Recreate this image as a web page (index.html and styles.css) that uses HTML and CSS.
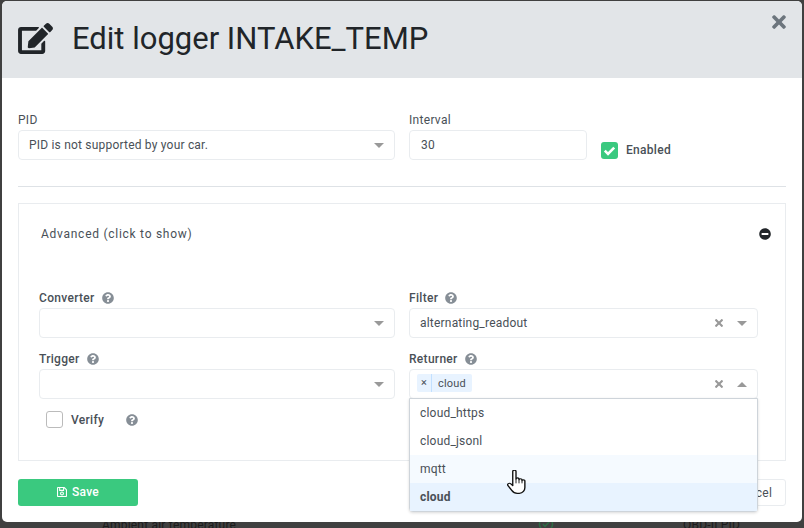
FILE: index.html
```html
<!DOCTYPE html>
<html lang="en">
<head>
    <meta charset="UTF-8">
    <meta name="viewport" content="width=device-width, initial-scale=1.0">
    <title>Edit logger</title>
    <link rel="stylesheet" href="styles.css">
</head>
<body>
    <svg class="sprite" xmlns="http://www.w3.org/2000/svg">
        <symbol id="i-help" viewBox="0 0 512 512"><path d="M504 256c0 136.997-111.043 248-248 248S8 392.997 8 256C8 119.083 119.043 8 256 8s248 111.083 248 248zM262.655 90c-54.497 0-89.255 22.957-116.549 63.758-3.536 5.286-2.353 12.415 2.715 16.258l34.699 26.31c5.205 3.947 12.621 3.008 16.665-2.122 17.864-22.658 30.113-35.797 57.303-35.797 20.429 0 45.698 13.148 45.698 32.958 0 14.976-12.363 22.667-32.534 33.976C247.128 238.528 216 254.941 216 296v4c0 6.627 5.373 12 12 12h56c6.627 0 12-5.373 12-12v-1.333c0-28.462 83.186-29.647 83.186-106.667 0-58.002-60.165-102-116.531-102zM256 338c-25.365 0-46 20.635-46 46 0 25.364 20.635 46 46 46s46-20.636 46-46c0-25.365-20.635-46-46-46z"/></symbol>
        <symbol id="i-times" viewBox="0 0 352 512"><path d="M242.72 256l100.07-100.07c12.28-12.28 12.28-32.19 0-44.48l-22.24-22.24c-12.28-12.28-32.19-12.28-44.48 0L176 189.28 75.93 89.21c-12.28-12.28-32.19-12.28-44.48 0L9.21 111.45c-12.28 12.28-12.28 32.19 0 44.48L109.28 256 9.21 356.07c-12.28 12.28-12.28 32.19 0 44.48l22.24 22.24c12.28 12.28 32.2 12.28 44.48 0L176 322.72l100.07 100.07c12.28 12.28 32.2 12.28 44.48 0l22.24-22.24c12.28-12.28 12.28-32.19 0-44.48L242.72 256z"/></symbol>
    </svg>

    <div class="behind">
        <span class="behind-name">Ambient air temperature</span>
        <svg class="behind-check" viewBox="0 0 16 16"><circle cx="8" cy="8" r="6.6"/><path d="M4.8 8l2.2 2.3 4.2-4.4"/></svg>
        <span class="behind-type">OBD-II PID</span>
    </div>

    <div class="modal">
        <div class="modal-header">
            <svg class="title-icon" viewBox="0 0 576 512"><path d="M402.6 83.2l90.2 90.2c3.8 3.8 3.8 10 0 13.8L274.4 405.6l-92.8 10.3c-12.4 1.4-22.9-9.1-21.5-21.5l10.3-92.8L388.8 83.2c3.8-3.8 10-3.8 13.8 0zm162-22.9l-48.8-48.8c-15.2-15.2-39.9-15.2-55.2 0l-35.4 35.4c-3.8 3.8-3.8 10 0 13.8l90.2 90.2c3.8 3.8 10 3.8 13.8 0l35.4-35.4c15.2-15.3 15.2-40 0-55.2zM384 346.2V448H64V128h229.8c3.2 0 6.2-1.3 8.5-3.5l40-40c7.6-7.6 2.2-20.5-8.5-20.5H48C21.5 64 0 85.5 0 112v352c0 26.5 21.5 48 48 48h352c26.5 0 48-21.5 48-48V306.2c0-10.7-12.9-16-20.5-8.5l-40 40c-2.2 2.3-3.5 5.3-3.5 8.5z"/></svg>
            <h1>Edit logger INTAKE_TEMP</h1>
            <svg class="close"><use href="#i-times"/></svg>
        </div>

        <div class="modal-body">
            <div class="top-row">
                <div class="field">
                    <label class="plain">PID</label>
                    <div class="select">
                        <span class="value">PID is not supported by your car.</span>
                        <span class="arrow"></span>
                    </div>
                </div>
                <div class="field">
                    <label class="plain">Interval</label>
                    <div class="input">30</div>
                </div>
                <div class="check-field">
                    <span class="check checked">
                        <svg viewBox="0 0 16 16"><path d="M3.6 8.2l3 3 5.8-6"/></svg>
                    </span>
                    <span class="check-label">Enabled</span>
                </div>
            </div>

            <hr>

            <div class="card">
                <div class="card-head">
                    <span>Advanced (click to show)</span>
                    <svg class="minus" viewBox="0 0 512 512"><path d="M256 8C119 8 8 119 8 256s111 248 248 248 248-111 248-248S393 8 256 8zM124 296c-6.6 0-12-5.4-12-12v-56c0-6.6 5.4-12 12-12h264c6.6 0 12 5.4 12 12v56c0 6.6-5.4 12-12 12H124z"/></svg>
                </div>
                <div class="card-grid">
                    <div class="field">
                        <label>Converter <svg class="help"><use href="#i-help"/></svg></label>
                        <div class="select"><span class="value"></span><span class="arrow"></span></div>
                    </div>
                    <div class="field">
                        <label>Filter <svg class="help"><use href="#i-help"/></svg></label>
                        <div class="select">
                            <span class="value">alternating_readout</span>
                            <svg class="clear"><use href="#i-times"/></svg>
                            <span class="arrow"></span>
                        </div>
                    </div>
                    <div class="field">
                        <label>Trigger <svg class="help"><use href="#i-help"/></svg></label>
                        <div class="select"><span class="value"></span><span class="arrow"></span></div>
                    </div>
                    <div class="field">
                        <label>Returner <svg class="help"><use href="#i-help"/></svg></label>
                        <div class="select open">
                            <span class="value tags">
                                <span class="tag"><span class="tag-x">×</span><span class="tag-text">cloud</span></span>
                            </span>
                            <svg class="clear"><use href="#i-times"/></svg>
                            <span class="arrow up"></span>
                            <ul class="menu">
                                <li>cloud_https</li>
                                <li>cloud_jsonl</li>
                                <li class="hover">mqtt</li>
                                <li class="selected">cloud</li>
                            </ul>
                        </div>
                    </div>
                </div>
                <div class="verify">
                    <span class="check"></span>
                    <span class="check-label">Verify</span>
                    <svg class="help"><use href="#i-help"/></svg>
                </div>
            </div>

            <div class="actions">
                <button class="btn-save">
                    <svg viewBox="0 0 448 512"><path d="M433.941 129.941l-83.882-83.882A48 48 0 0 0 316.118 32H48C21.49 32 0 53.49 0 80v352c0 26.51 21.49 48 48 48h352c26.51 0 48-21.49 48-48V163.882a48 48 0 0 0-14.059-33.941zM272 80v80H144V80h128zm122 352H54a6 6 0 0 1-6-6V86a6 6 0 0 1 6-6h42v104c0 13.255 10.745 24 24 24h176c13.255 0 24-10.745 24-24V83.882l78.243 78.243a6 6 0 0 1 1.757 4.243V426a6 6 0 0 1-6 6zM224 232c-48.523 0-88 39.477-88 88s39.477 88 88 88 88-39.477 88-88-39.477-88-88-88zm0 128c-22.056 0-40-17.944-40-40s17.944-40 40-40 40 17.944 40 40-17.944 40-40 40z"/></svg>
                    Save
                </button>
                <button class="btn-cancel">Cancel</button>
            </div>
        </div>
    </div>

    <svg class="cursor" viewBox="1 1 16 24" preserveAspectRatio="none">
        <path d="M5.6 2.4c0-1.6 2.6-1.6 2.6 0v7.2c0-1.3 2.4-1.3 2.4 0v.8c0-1.3 2.4-1.3 2.4 0v.9c0-1.2 2.3-1.2 2.3 .1v6.4c0 2.6-1.6 5.6-4.4 5.6H9.2c-2.2 0-3.4-1.2-4.4-2.8l-3-4.6c-1-1.6 1-3 2.3-1.7l1.5 1.7z"/>
        <path class="finger" d="M8.2 9.6v4.2M10.6 10.4v3.4M13 11.3v2.5"/>
    </svg>
</body>
</html>
```

FILE: styles.css
```css
* {
    box-sizing: border-box;
}
body {
    font-family: Roboto, Arial, sans-serif;
    font-size: 12px;
    letter-spacing: 0.2px;
    color: #495057;
    background-color: #404040;
    margin: 0;
    padding: 1px 2px;
    height: 528px;
    overflow: hidden;
    position: relative;
}
.sprite {
    display: none;
}

/* page that shows below the modal */
.behind {
    position: absolute;
    left: 0;
    top: 518px;
    width: 100%;
    height: 20px;
    color: #1c1c1c;
}
.behind-name {
    position: absolute;
    left: 102px;
    top: 0;
}
.behind-type {
    position: absolute;
    left: 683px;
    top: 0;
}
.behind-check {
    position: absolute;
    left: 538px;
    top: -2px;
    width: 16px;
    height: 16px;
    fill: none;
    stroke: #2f6b45;
    stroke-width: 1.5;
}

.modal {
    position: relative;
    width: 800px;
    height: 521px;
    background-color: #fff;
    border-radius: 5px;
    overflow: hidden;
}
.modal-header {
    display: flex;
    align-items: center;
    height: 77px;
    padding: 0 16px 2px;
    background-color: #e2e5e8;
    color: #212529;
    position: relative;
}
.title-icon {
    width: 35px;
    height: 31px;
    margin-right: 19px;
    fill: #212529;
}
h1 {
    margin: 0;
    font-size: 31px;
    font-weight: 400;
    letter-spacing: 0;
}
.close {
    position: absolute;
    right: 16px;
    top: 11px;
    width: 14px;
    height: 20px;
    fill: #6c757d;
}

.modal-body {
    padding: 34px 16px 0;
}
label {
    display: flex;
    align-items: center;
    gap: 5px;
    height: 18px;
    padding-bottom: 2px;
    letter-spacing: 0.3px;
}
.top-row {
    display: grid;
    grid-template-columns: 377px 178px auto;
    column-gap: 14px;
}
.select, .input {
    display: flex;
    align-items: center;
    position: relative;
    height: 30px;
    padding: 0 10px;
    background-color: #fff;
    border: 1px solid #e9ecef;
    border-radius: 4px;
}
.input {
    padding: 0 11px;
}
.value {
    flex: 1;
}
.arrow {
    width: 0;
    height: 0;
    margin-right: 0;
    border-left: 5px solid transparent;
    border-right: 5px solid transparent;
    border-top: 5px solid #999;
}
.arrow.up {
    border-top: 0;
    border-bottom: 5px solid #999;
}
.clear {
    width: 8px;
    height: 12px;
    margin-right: 14px;
    fill: #999;
}
.check-field {
    display: flex;
    align-items: center;
    padding-top: 29px;
    gap: 8px;
}
.check {
    display: block;
    width: 17px;
    height: 17px;
    border: 1px solid #bbb;
    border-radius: 3px;
    background-color: #fff;
}
.check.checked {
    border: 0;
    background-color: #3ac97f;
}
.check svg {
    display: block;
    width: 17px;
    height: 17px;
    fill: none;
    stroke: #fff;
    stroke-width: 2.4;
}
.check-label {
    font-weight: 500;
    letter-spacing: 0.3px;
}
.check-field .check-label {
    margin-top: -2px;
}
hr {
    height: 1px;
    margin: 26px 0 16px;
    border: 0;
    background-color: #dee2e6;
}

.card {
    height: 258px;
    padding: 0 27px 0 20px;
    border: 1px solid #e9ecef;
}
.card-head {
    display: flex;
    justify-content: space-between;
    align-items: center;
    height: 60px;
    padding: 0 0 0 2px;
    margin-right: -13px;
    color: #495057;
    letter-spacing: 0.73px;
}
.minus {
    width: 12px;
    height: 12px;
    fill: #212529;
}
.card-grid {
    display: grid;
    grid-template-columns: 356px 349px;
    column-gap: 14px;
    row-gap: 13px;
    margin-top: 26px;
}
.card-grid label {
    font-weight: 500;
}
.help {
    width: 12px;
    height: 12px;
    margin-left: 2px;
    fill: #868e96;
}
.verify {
    display: flex;
    align-items: center;
    margin: 12px 0 0 7px;
}
.verify .check-label {
    margin-left: 8px;
}
.verify .help {
    margin-left: 22px;
}
.tags {
    display: flex;
    margin: -2px 0 0 -3px;
}
.tag {
    display: flex;
    align-items: center;
    height: 18px;
    background-color: #e8f3ff;
    border-radius: 2px;
}
.tag-x {
    width: 15px;
    height: 18px;
    line-height: 18px;
    text-align: center;
    font-size: 11px;
    border-right: 1px solid #c2e0ff;
}
.tag-text {
    padding: 0 6px;
    font-size: 11px;
}
.menu {
    position: absolute;
    left: -1px;
    right: -1px;
    top: 28px;
    z-index: 2;
    margin: 0;
    padding: 0;
    list-style: none;
    background-color: #fff;
    border: 1px solid #ced4da;
    border-radius: 0 0 4px 4px;
    box-shadow: 0 1px 3px rgba(0, 0, 0, 0.15);
}
.menu li {
    height: 28px;
    line-height: 28px;
    padding: 0 10px;
}
.menu .hover {
    background-color: #f5faff;
}
.menu .selected {
    background-color: #e8f3ff;
    font-weight: 700;
}

.actions {
    display: flex;
    justify-content: space-between;
    margin-top: 18px;
}
button {
    height: 27px;
    font-family: inherit;
    font-size: 12px;
    letter-spacing: 0.3px;
    border-radius: 3px;
    border: 1px solid transparent;
}
.btn-save {
    display: flex;
    align-items: center;
    justify-content: center;
    gap: 5px;
    width: 120px;
    padding-bottom: 3px;
    background-color: #3ac97f;
    color: #fff;
    font-weight: 500;
}
.btn-save svg {
    width: 10px;
    height: 12px;
    fill: #fff;
}
.btn-cancel {
    width: 66px;
    background-color: #fff;
    border-color: #e9ecef;
    color: #495057;
}

.cursor {
    position: absolute;
    left: 507px;
    top: 470px;
    width: 20px;
    height: 25px;
    z-index: 5;
}
.cursor path {
    fill: #fff;
    stroke: #111;
    stroke-width: 1.1;
    stroke-linejoin: round;
}
.cursor .finger {
    fill: none;
    stroke-width: 0.8;
}
```
